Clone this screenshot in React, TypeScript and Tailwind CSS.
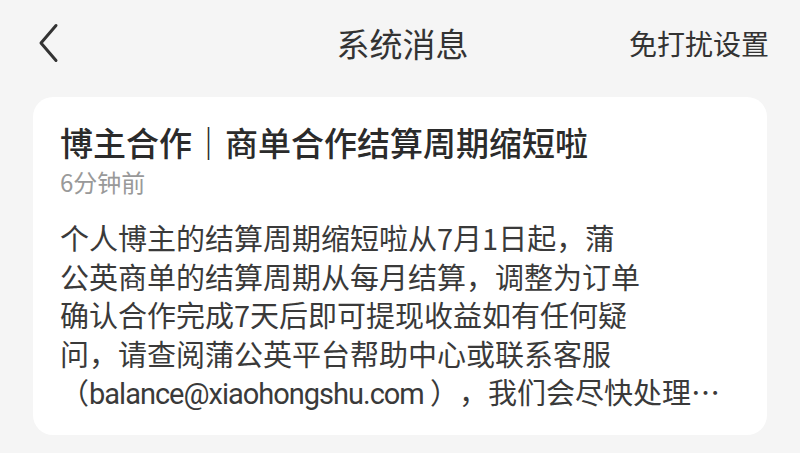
import React from "react";

const lines = [
  "个人博主的结算周期缩短啦从7月1日起，蒲",
  "公英商单的结算周期从每月结算，调整为订单",
  "确认合作完成7天后即可提现收益如有任何疑",
  "问，请查阅蒲公英平台帮助中心或联系客服",
];

export default function App() {
  return (
    <div
      className="w-full h-[453px] overflow-hidden bg-[#f5f5f5] text-[#333333]"
      style={{ fontFamily: '"Noto Sans CJK SC", "Noto Sans", sans-serif' }}
    >
      {/* Header */}
      <div className="h-[86px] grid grid-cols-[1fr_auto_1fr] items-center pl-[36px] pr-[31px]">
        <div className="flex items-center">
          <svg width="24" height="40" viewBox="0 0 24 40" fill="none">
            <path d="M20 2.5 L5 20 L20 37.5" stroke="#333333" strokeWidth="3" strokeLinecap="round" strokeLinejoin="round" />
          </svg>
        </div>
        <div className="text-[33px] leading-none text-[#333333]">系统消息</div>
        <div className="text-[28px] leading-none text-right text-[#333333]">免打扰设置</div>
      </div>

      {/* Message card */}
      <div className="mx-[33px] mt-[11px] rounded-[20px] bg-white pl-[27px] pt-[23px] pb-[21px]">
        <div className="text-[33px] leading-[44px] font-medium text-[#2b2b2b]">
          博主合作｜商单合作结算周期缩短啦
        </div>
        <div className="mt-[2px] text-[24px] leading-[32px] text-[#999999]">6分钟前</div>
        <div className="mt-[20px] text-[29px] leading-[38.5px] text-[#3a3a3a]">
          {lines.map((l) => (
            <div key={l} className="whitespace-nowrap">
              {l}
            </div>
          ))}
          <div className="whitespace-nowrap [text-spacing-trim:space-all]">
            （
            <span className="tracking-[-1px]" style={{ fontFamily: 'Roboto, "Noto Sans CJK SC", sans-serif' }}>
              balance@xiaohongshu.com{" "}
            </span>
            ），我们会尽快处理…
          </div>
        </div>
      </div>
    </div>
  );
}
